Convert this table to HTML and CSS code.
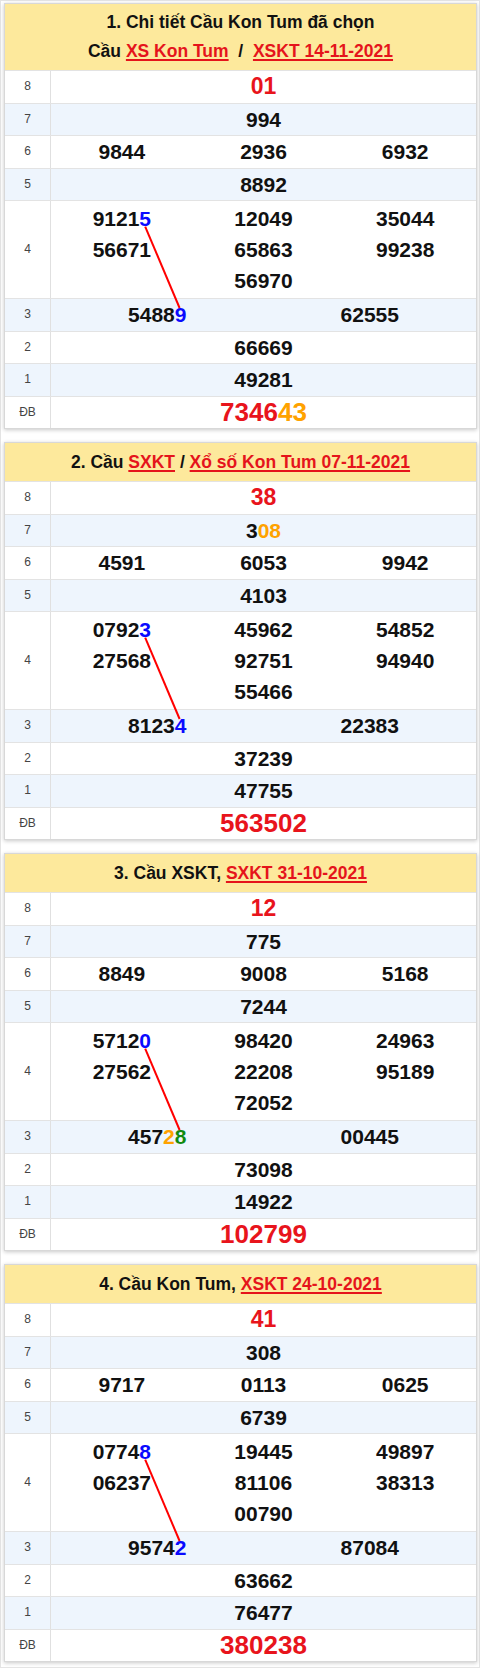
FILE: index.html
```html
<!DOCTYPE html>
<html lang="vi">
<head>
<meta charset="utf-8">
<title>Cầu Kon Tum</title>
<link rel="stylesheet" href="styles.css">
</head>
<body>
<div class="page">

  <section class="card">
    <header class="card-head">
      <div class="head-line">1. Chi tiết Cầu Kon Tum đã chọn</div>
      <div class="head-line">Cầu <a class="link" href="#">XS Kon Tum</a>&nbsp; / &nbsp;<a class="link" href="#">XSKT 14-11-2021</a></div>
    </header>
    <div class="row"><div class="lbl">8</div><div class="val"><span class="num g8 red">01</span></div></div>
    <div class="row"><div class="lbl">7</div><div class="val"><span class="num">994</span></div></div>
    <div class="row"><div class="lbl">6</div><div class="val c3"><span class="num">9844</span><span class="num">2936</span><span class="num">6932</span></div></div>
    <div class="row"><div class="lbl">5</div><div class="val"><span class="num">8892</span></div></div>
    <div class="row"><div class="lbl">4</div><div class="val c3 tall"><span class="num">9121<span class="blue from">5</span></span><span class="num">12049</span><span class="num">35044</span><span class="num">56671</span><span class="num">65863</span><span class="num">99238</span><span class="num mid">56970</span></div></div>
    <div class="row"><div class="lbl">3</div><div class="val c2"><span class="num">5488<span class="blue to">9</span></span><span class="num">62555</span></div></div>
    <div class="row"><div class="lbl">2</div><div class="val"><span class="num">66669</span></div></div>
    <div class="row"><div class="lbl">1</div><div class="val"><span class="num">49281</span></div></div>
    <div class="row"><div class="lbl">ĐB</div><div class="val"><span class="num db red">7346<span class="orange">43</span></span></div></div>
    <svg class="bridge" xmlns="http://www.w3.org/2000/svg"></svg>
  </section>

  <section class="card">
    <header class="card-head single">
      <div class="head-line">2. Cầu <a class="link" href="#">SXKT</a> / <a class="link" href="#">Xổ số Kon Tum 07-11-2021</a></div>
    </header>
    <div class="row"><div class="lbl">8</div><div class="val"><span class="num g8 red">38</span></div></div>
    <div class="row"><div class="lbl">7</div><div class="val"><span class="num">3<span class="orange">08</span></span></div></div>
    <div class="row"><div class="lbl">6</div><div class="val c3"><span class="num">4591</span><span class="num">6053</span><span class="num">9942</span></div></div>
    <div class="row"><div class="lbl">5</div><div class="val"><span class="num">4103</span></div></div>
    <div class="row"><div class="lbl">4</div><div class="val c3 tall"><span class="num">0792<span class="blue from">3</span></span><span class="num">45962</span><span class="num">54852</span><span class="num">27568</span><span class="num">92751</span><span class="num">94940</span><span class="num mid">55466</span></div></div>
    <div class="row"><div class="lbl">3</div><div class="val c2"><span class="num">8123<span class="blue to">4</span></span><span class="num">22383</span></div></div>
    <div class="row"><div class="lbl">2</div><div class="val"><span class="num">37239</span></div></div>
    <div class="row"><div class="lbl">1</div><div class="val"><span class="num">47755</span></div></div>
    <div class="row"><div class="lbl">ĐB</div><div class="val"><span class="num db red">563502</span></div></div>
    <svg class="bridge" xmlns="http://www.w3.org/2000/svg"></svg>
  </section>

  <section class="card">
    <header class="card-head single">
      <div class="head-line">3. Cầu XSKT, <a class="link" href="#">SXKT 31-10-2021</a></div>
    </header>
    <div class="row"><div class="lbl">8</div><div class="val"><span class="num g8 red">12</span></div></div>
    <div class="row"><div class="lbl">7</div><div class="val"><span class="num">775</span></div></div>
    <div class="row"><div class="lbl">6</div><div class="val c3"><span class="num">8849</span><span class="num">9008</span><span class="num">5168</span></div></div>
    <div class="row"><div class="lbl">5</div><div class="val"><span class="num">7244</span></div></div>
    <div class="row"><div class="lbl">4</div><div class="val c3 tall"><span class="num">5712<span class="blue from">0</span></span><span class="num">98420</span><span class="num">24963</span><span class="num">27562</span><span class="num">22208</span><span class="num">95189</span><span class="num mid">72052</span></div></div>
    <div class="row"><div class="lbl">3</div><div class="val c2"><span class="num">457<span class="orange">2</span><span class="green to">8</span></span><span class="num">00445</span></div></div>
    <div class="row"><div class="lbl">2</div><div class="val"><span class="num">73098</span></div></div>
    <div class="row"><div class="lbl">1</div><div class="val"><span class="num">14922</span></div></div>
    <div class="row"><div class="lbl">ĐB</div><div class="val"><span class="num db red">102799</span></div></div>
    <svg class="bridge" xmlns="http://www.w3.org/2000/svg"></svg>
  </section>

  <section class="card">
    <header class="card-head single">
      <div class="head-line">4. Cầu Kon Tum, <a class="link" href="#">XSKT 24-10-2021</a></div>
    </header>
    <div class="row"><div class="lbl">8</div><div class="val"><span class="num g8 red">41</span></div></div>
    <div class="row"><div class="lbl">7</div><div class="val"><span class="num">308</span></div></div>
    <div class="row"><div class="lbl">6</div><div class="val c3"><span class="num">9717</span><span class="num">0113</span><span class="num">0625</span></div></div>
    <div class="row"><div class="lbl">5</div><div class="val"><span class="num">6739</span></div></div>
    <div class="row"><div class="lbl">4</div><div class="val c3 tall"><span class="num">0774<span class="blue from">8</span></span><span class="num">19445</span><span class="num">49897</span><span class="num">06237</span><span class="num">81106</span><span class="num">38313</span><span class="num mid">00790</span></div></div>
    <div class="row"><div class="lbl">3</div><div class="val c2"><span class="num">9574<span class="blue to">2</span></span><span class="num">87084</span></div></div>
    <div class="row"><div class="lbl">2</div><div class="val"><span class="num">63662</span></div></div>
    <div class="row"><div class="lbl">1</div><div class="val"><span class="num">76477</span></div></div>
    <div class="row"><div class="lbl">ĐB</div><div class="val"><span class="num db red">380238</span></div></div>
    <svg class="bridge" xmlns="http://www.w3.org/2000/svg"></svg>
  </section>

</div>
<script src="script.js"></script>
</body>
</html>
```

FILE: styles.css
```css
html, body {
  margin: 0;
  padding: 0;
  background: #ffffff;
}
body {
  font-family: "Liberation Sans", Arial, sans-serif;
  color: #111;
}
.page {
  border: 1px solid #e4e4e4;
  padding: 2px 2px 3px 3px;
  min-height: 1661px;
  box-sizing: content-box;
}
.card {
  position: relative;
  border: 1px solid #d8d8d8;
  box-shadow: 0 1px 4px rgba(0, 0, 0, 0.22);
  background: #fff;
  margin-bottom: 13px;
}
.card:last-child {
  margin-bottom: 0;
}
.card-head {
  background: #fde99c;
  text-align: center;
  font-weight: bold;
  font-size: 17.5px;
  padding: 4px 0 4px;
}
.card-head .head-line {
  line-height: 29px;
}
.card-head.single {
  padding: 5px 0 5px;
}
.card-head.single .head-line {
  line-height: 28px;
}
.link {
  color: #e5141b;
  text-decoration: underline;
  text-decoration-thickness: 1.5px;
  text-underline-offset: 2px;
}
.row {
  display: grid;
  grid-template-columns: 46px 1fr;
  border-top: 1px solid #e3e3e3;
  line-height: 31.5px;
}
.row:nth-child(odd) {
  background: #eef5fd;
}
.lbl {
  display: flex;
  align-items: center;
  justify-content: center;
  border-right: 1px solid #e0e0e0;
  font-size: 12px;
  color: #444;
}
.val {
  display: grid;
  grid-template-columns: 1fr;
  text-align: center;
}
.val.c3 {
  grid-template-columns: 1fr 1fr 1fr;
}
.val.c2 {
  grid-template-columns: 1fr 1fr;
}
.val.tall {
  line-height: 31px;
  padding: 2px 0 2px;
}
.num {
  font-weight: bold;
  font-size: 21px;
  color: #111;
}
.num.mid {
  grid-column: 2;
}
.num.g8 {
  font-size: 23px;
}
.num.db {
  font-size: 26px;
}
.red {
  color: #e8141c;
}
.orange {
  color: #ffa200;
}
.blue {
  color: #0a0aff;
}
.green {
  color: #118a0f;
}
.bridge {
  position: absolute;
  left: 0;
  top: 0;
  width: 100%;
  height: 100%;
  pointer-events: none;
  overflow: visible;
}
```

FILE: script.js
```js
document.querySelectorAll('.card').forEach(function (card) {
  var a = card.querySelector('.from');
  var b = card.querySelector('.to');
  var svg = card.querySelector('.bridge');
  if (!a || !b || !svg) return;
  var cr = card.getBoundingClientRect();
  var ra = a.getBoundingClientRect();
  var rb = b.getBoundingClientRect();
  var fa = parseFloat(getComputedStyle(a).fontSize);
  var fb = parseFloat(getComputedStyle(b).fontSize);
  var x1 = ra.left + ra.width / 2 - cr.left - 1;
  var y1 = ra.bottom - 0.212 * fa - cr.top;
  var x2 = rb.left + rb.width / 2 - cr.left - 2;
  var y2 = rb.top + 0.19 * fb - cr.top;
  var line = document.createElementNS('http://www.w3.org/2000/svg', 'line');
  line.setAttribute('x1', x1);
  line.setAttribute('y1', y1);
  line.setAttribute('x2', x2);
  line.setAttribute('y2', y2);
  line.setAttribute('stroke', '#ff0000');
  line.setAttribute('stroke-width', '2');
  svg.appendChild(line);
});
```
